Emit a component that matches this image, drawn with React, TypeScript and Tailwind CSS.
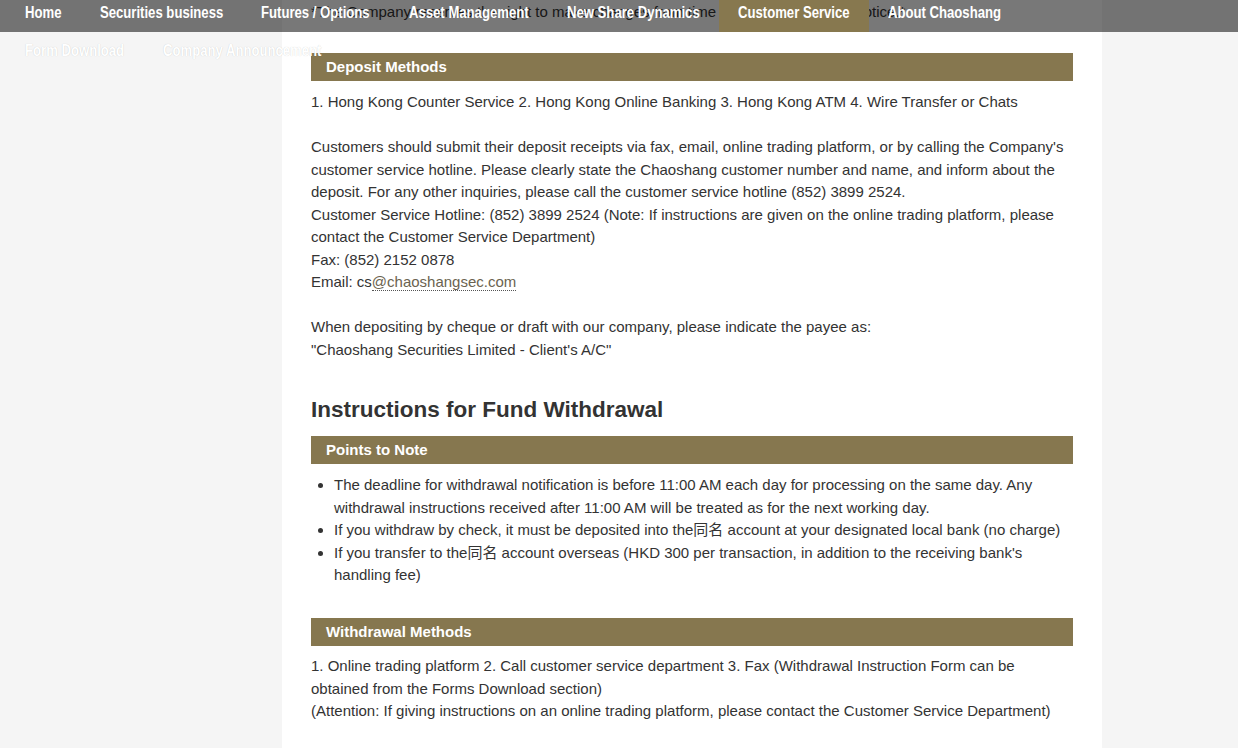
import React from "react";

// Menu entries with their fixed box widths (label width + 19px padding each side).
const navItems = [
  { label: "Home", w: "w-[75px]" },
  { label: "Securities business", w: "w-[161px]" },
  { label: "Futures / Options", w: "w-[148px]" },
  { label: "Asset Management", w: "w-[158px]" },
  { label: "New Share Dynamics", w: "w-[171px]" },
  { label: "Customer Service", w: "w-[150px]", active: true },
  { label: "About Chaoshang", w: "w-[152px]" },
  { label: "Form Download", w: "w-[138px]", overflow: true },
  { label: "Company Announcement", w: "w-[196px]", overflow: true },
];

const bodyFont = { fontFamily: '"Liberation Sans", Arial, sans-serif' };
const cjk = { fontFamily: '"Noto Sans CJK SC", "Noto Sans CJK TC", sans-serif' };

function SectionBar({ title, className = "" }: { title: string; className?: string }) {
  return (
    <div
      className={`h-[28px] bg-[#86774f] pl-[15px] text-[15px] font-bold leading-[28px] text-white ${className}`}
    >
      {title}
    </div>
  );
}

function TopNav() {
  return (
    <div className="absolute left-0 right-0 top-0 z-10">
      <div className="absolute left-0 right-0 top-0 h-8 bg-black/[0.53]" />
      <ul className="relative flex w-[1102px] flex-wrap gap-y-[6px] pl-[6px]">
        {navItems.map((item) => (
          <li
            key={item.label}
            className={`h-8 shrink-0 px-[19px] text-[16px] font-bold leading-[25px] text-white ${item.w} ${
              item.active ? "bg-[#87784f]" : ""
            } ${item.overflow ? "[text-shadow:0_0_1px_rgba(0,0,0,0.2)]" : ""}`}
          >
            {/* condensed headline face, narrowed horizontally */}
            <span className="inline-block origin-left scale-x-[0.82] whitespace-nowrap">{item.label}</span>
          </li>
        ))}
      </ul>
    </div>
  );
}

export default function App() {
  return (
    <div className="relative min-h-[748px] bg-[#f5f5f5]" style={bodyFont}>
      <TopNav />
      <main className="ml-[282px] w-[820px] bg-white px-[29px] pb-[40px] text-[15px] leading-[22.5px] text-[#333]">
        <p className="whitespace-nowrap pt-[1px]">
          *The Company reserves the right to make changes from time to time without prior notice.*
        </p>

        <SectionBar title="Deposit Methods" className="mt-[29.5px]" />
        <div className="mt-[10px]">
          <p>
            1. Hong Kong Counter Service 2. Hong Kong Online Banking 3. Hong Kong ATM 4. Wire Transfer or Chats
          </p>
          <p className="mt-[22.5px]">
            Customers should submit their deposit receipts via fax, email, online trading platform, or by calling the
            Company's customer service hotline. Please clearly state the Chaoshang customer number and name, and inform
            about the deposit. For any other inquiries, please call the customer service hotline (852) 3899 2524.
          </p>
          <p>
            Customer Service Hotline: (852) 3899 2524 (Note: If instructions are given on the online trading platform,
            please contact the Customer Service Department)
          </p>
          <p>Fax: (852) 2152 0878</p>
          <p>
            Email: cs
            <a className="border-b border-dotted border-[#555] text-[#6b6350]">@chaoshangsec.com</a>
          </p>
          <p className="mt-[22.5px]">When depositing by cheque or draft with our company, please indicate the payee as:</p>
          <p>"Chaoshang Securities Limited - Client's A/C"</p>
        </div>

        <h2 className="mt-[34.5px] text-[22.5px] font-bold leading-[27px] text-[#333]">
          Instructions for Fund Withdrawal
        </h2>

        <SectionBar title="Points to Note" className="mt-[13.5px]" />
        <ul className="mt-[10px] list-disc pl-[23px]">
          <li>
            The deadline for withdrawal notification is before 11:00 AM each day for processing on the same day. Any
            withdrawal instructions received after 11:00 AM will be treated as for the next working day.
          </li>
          <li>
            If you withdraw by check, it must be deposited into the
            <span className="leading-none" style={cjk}>
              同名
            </span>{" "}
            account at your designated local bank (no charge)
          </li>
          <li>
            If you transfer to the
            <span className="leading-none" style={cjk}>
              同名
            </span>{" "}
            account overseas (HKD 300 per transaction, in addition to the receiving bank's handling fee)
          </li>
        </ul>

        <SectionBar title="Withdrawal Methods" className="mt-[31.5px]" />
        <div className="mt-[9px]">
          <p>
            1. Online trading platform 2. Call customer service department 3. Fax (Withdrawal Instruction Form can be
            obtained from the Forms Download section)
          </p>
          <p>(Attention: If giving instructions on an online trading platform, please contact the Customer Service Department)</p>
        </div>
      </main>
    </div>
  );
}
